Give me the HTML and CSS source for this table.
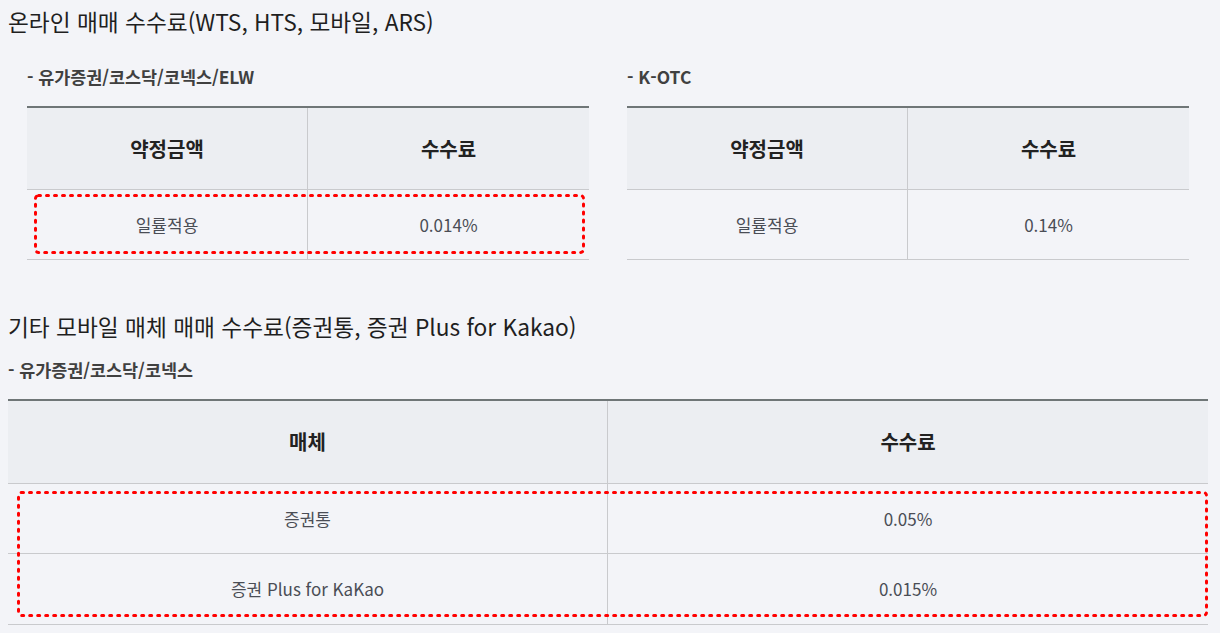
FILE: index.html
```html
<!DOCTYPE html>
<html lang="ko">
<head>
<meta charset="utf-8">
<title>수수료 안내</title>
<link rel="stylesheet" href="styles.css">
</head>
<body>
<main class="page">
  <h2 class="section-title">온라인 매매 수수료(WTS, HTS, 모바일, ARS)</h2>
  <div class="two-col">
    <section class="col">
      <h3 class="sub-title">- 유가증권/코스닥/코넥스/ELW</h3>
      <div class="table-wrap">
        <table class="fee-table">
          <thead>
            <tr><th>약정금액</th><th>수수료</th></tr>
          </thead>
          <tbody>
            <tr><td>일률적용</td><td>0.014%</td></tr>
          </tbody>
        </table>
        <svg class="mark mark-1" width="551" height="60" aria-hidden="true">
          <rect x="1.5" y="1.5" width="548" height="57" rx="3" ry="3"/>
        </svg>
      </div>
    </section>
    <section class="col">
      <h3 class="sub-title">- K-OTC</h3>
      <div class="table-wrap">
        <table class="fee-table">
          <thead>
            <tr><th>약정금액</th><th>수수료</th></tr>
          </thead>
          <tbody>
            <tr><td>일률적용</td><td>0.14%</td></tr>
          </tbody>
        </table>
      </div>
    </section>
  </div>

  <h2 class="section-title section-title--second">기타 모바일 매체 매매 수수료(증권통, 증권 Plus for Kakao)</h2>
  <h3 class="sub-title sub-title--flush">- 유가증권/코스닥/코넥스</h3>
  <div class="table-wrap">
    <table class="fee-table fee-table--wide">
      <thead>
        <tr><th>매체</th><th>수수료</th></tr>
      </thead>
      <tbody>
        <tr><td>증권통</td><td>0.05%</td></tr>
        <tr><td>증권 Plus for KaKao</td><td>0.015%</td></tr>
      </tbody>
    </table>
    <svg class="mark mark-2" width="1191" height="126" aria-hidden="true">
      <rect x="1.5" y="1.5" width="1188" height="123" rx="3" ry="3"/>
    </svg>
  </div>
</main>
</body>
</html>
```

FILE: styles.css
```css
* { box-sizing: border-box; }

html, body {
  margin: 0;
  padding: 0;
  background: #f3f4f8;
}

body {
  font-family: "Noto Sans CJK KR", "Noto Sans", sans-serif;
  color: #222;
}

.page {
  width: 1200px;
  margin-left: 8px;
  padding-top: 5px;
}

.section-title {
  margin: 0;
  font-size: 22.7px;
  line-height: 33px;
  font-weight: 400;
  color: #1f1f1f;
}

.section-title--second {
  margin-top: 50px;
}

.two-col {
  display: grid;
  grid-template-columns: 1fr 1fr;
}

.col {
  padding: 0 19px;
}

.sub-title {
  margin: 26px 0 17px;
  font-size: 17.4px;
  line-height: 25px;
  font-weight: 700;
  color: #404040;
}

.sub-title--flush {
  margin: 14px 0 17px;
}

.table-wrap {
  position: relative;
}

.fee-table {
  width: 100%;
  border-collapse: separate;
  border-spacing: 0;
  border-top: 2px solid #6f7677;
  table-layout: fixed;
}

.fee-table th,
.fee-table td {
  text-align: center;
  border-bottom: 1px solid #c9cacd;
}

.fee-table th:first-child,
.fee-table td:first-child {
  border-right: 1px solid #c9cacd;
}

.fee-table th {
  background: #eceef2;
  font-size: 20px;
  font-weight: 700;
  line-height: 27px;
  padding: 27px 0;
  color: #222;
}

.fee-table td {
  font-size: 17px;
  line-height: 25px;
  padding: 22px 0;
  color: #4a4d55;
  font-weight: 400;
}

.fee-table--wide th {
  padding: 27px 0 28px;
}

.fee-table--wide tbody tr:last-child td {
  padding-bottom: 23px;
}

.mark {
  position: absolute;
  pointer-events: none;
  overflow: visible;
}

.mark rect {
  fill: none;
  stroke: #ff0000;
  stroke-width: 3;
  stroke-dasharray: 2 6;
  stroke-linecap: round;
}

.mark-1 {
  left: 7px;
  top: 88px;
}

.mark-2 {
  left: 9px;
  top: 92px;
}
```
